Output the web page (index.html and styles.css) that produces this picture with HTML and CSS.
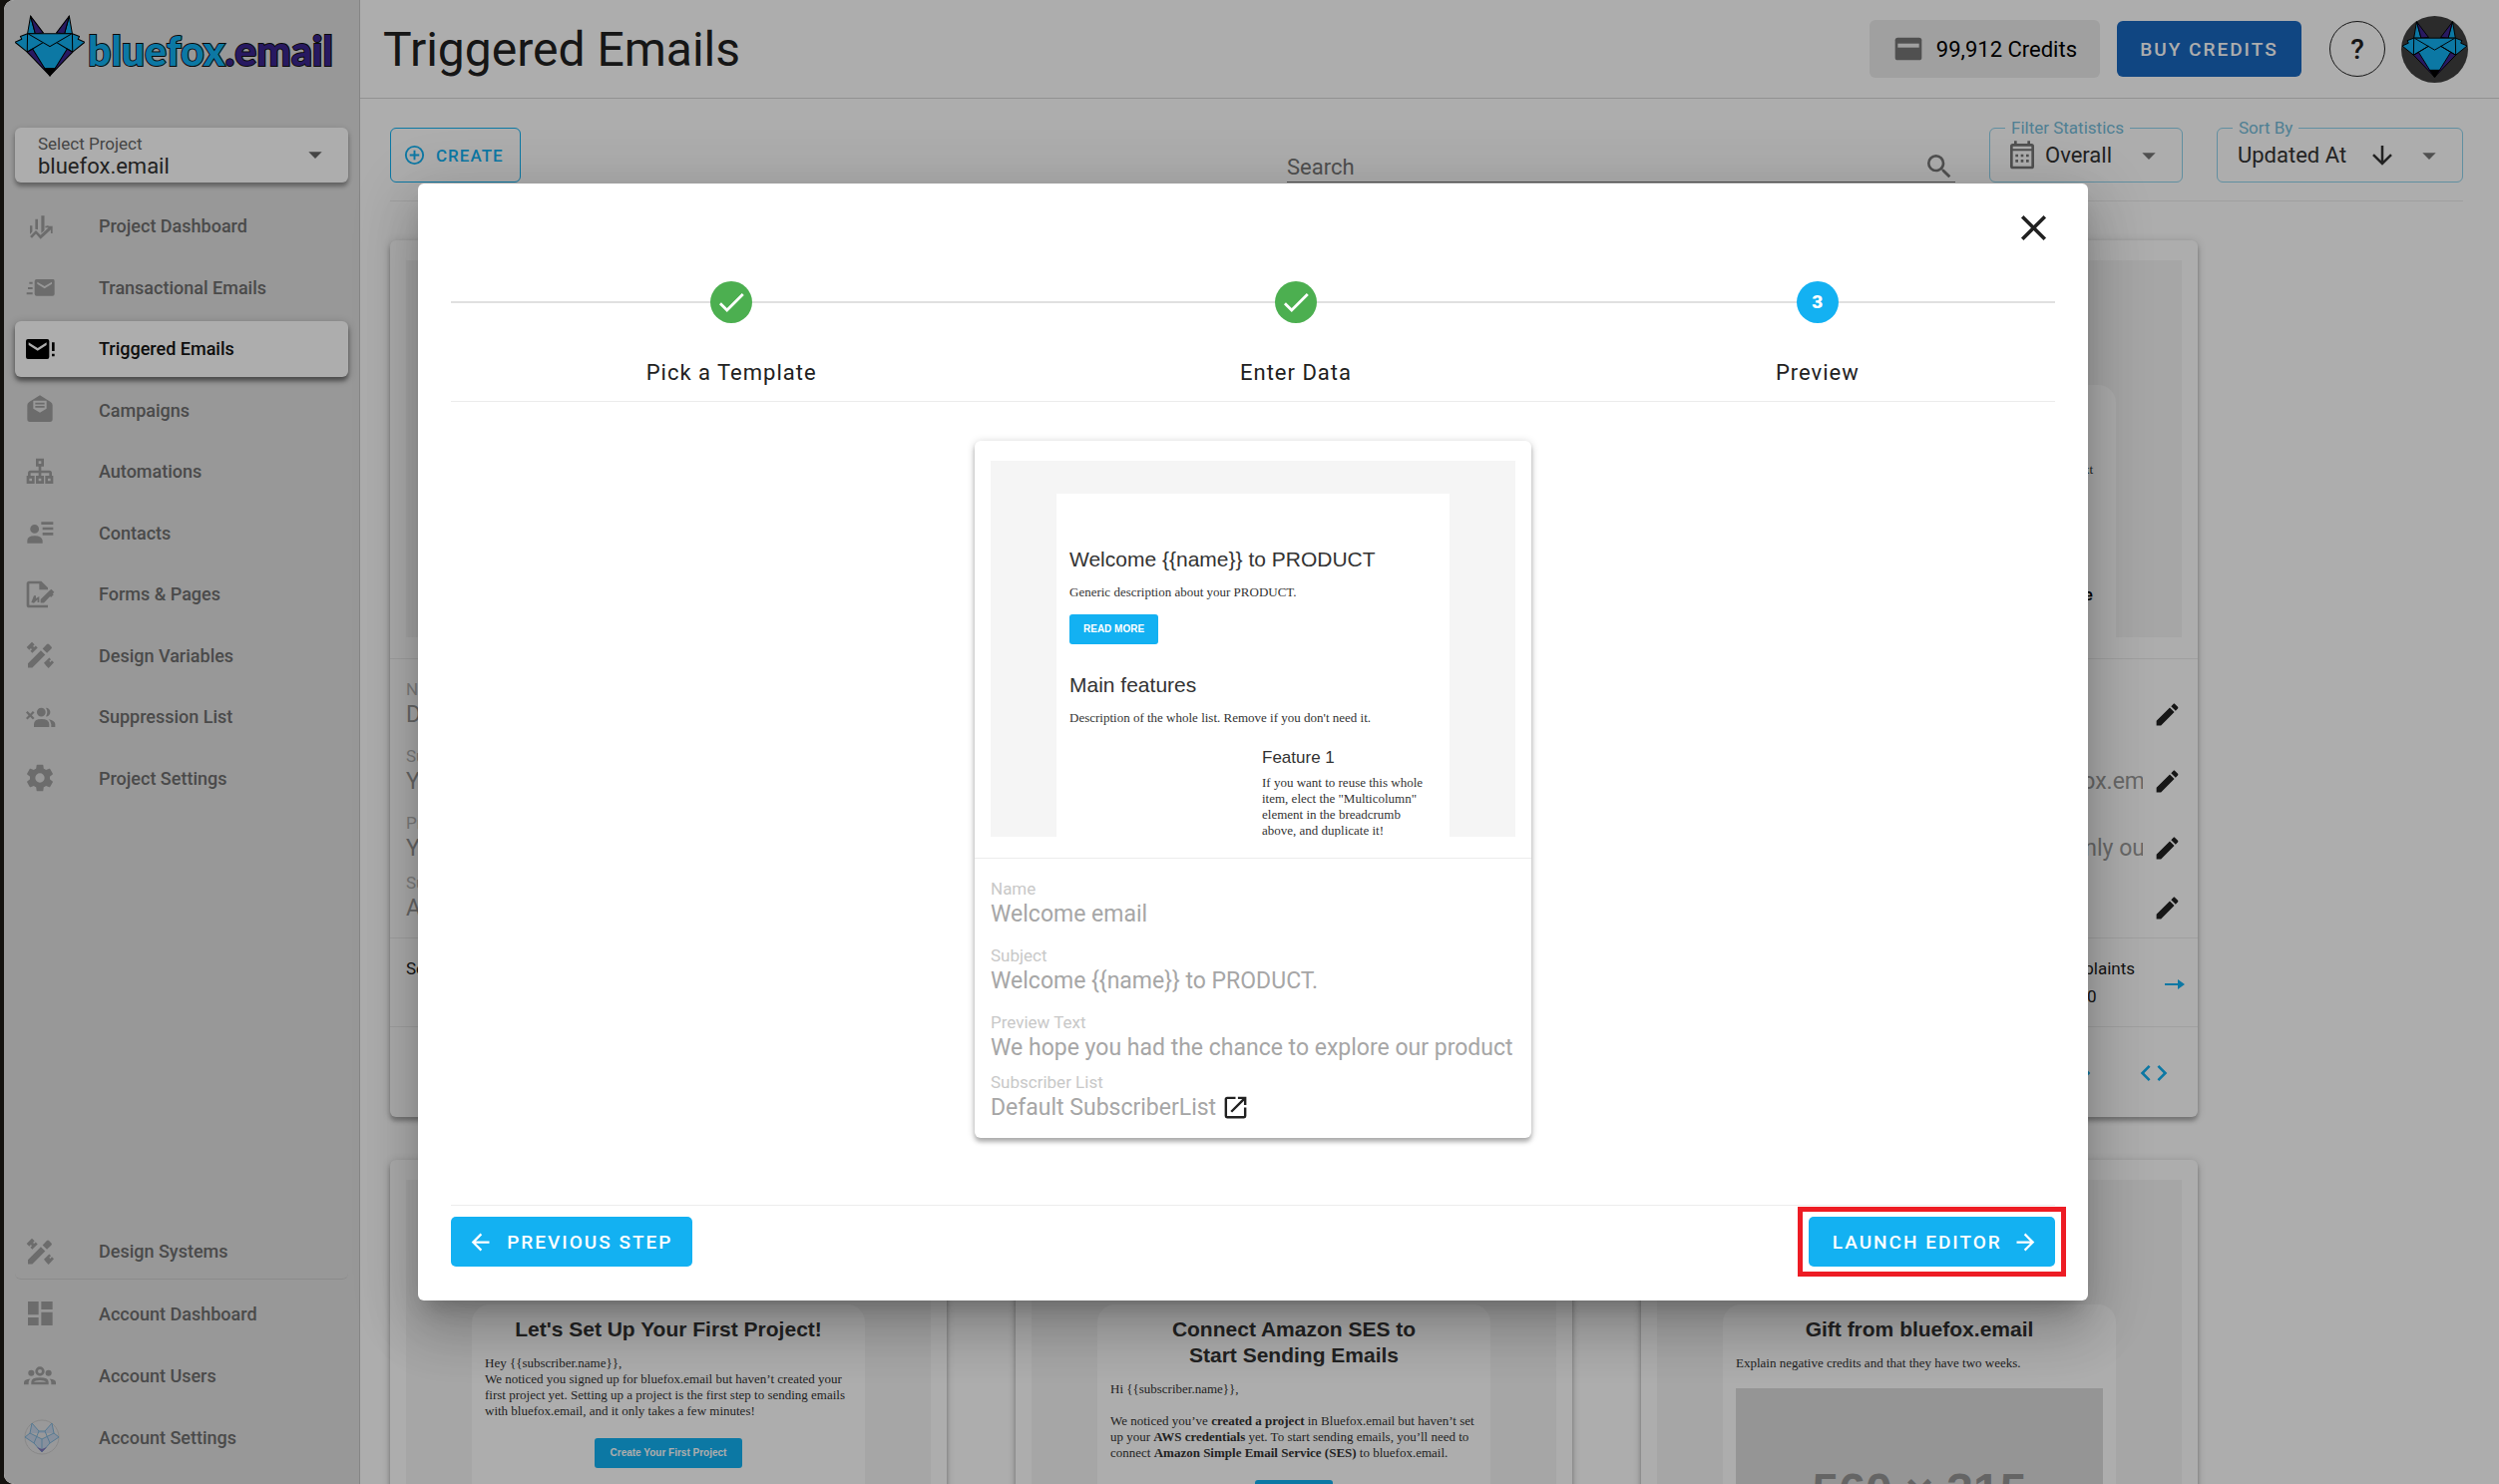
FILE: index.html
```html
<!DOCTYPE html>
<html lang="en">
<head>
<meta charset="utf-8">
<title>Triggered Emails - bluefox.email</title>
<link rel="stylesheet" href="styles.css">
</head>
<body>
<svg class="sprite" aria-hidden="true">
  <symbol id="fox" viewBox="0 0 206 180">
    <g stroke="#000" stroke-width="3" stroke-linejoin="round">
      <path fill="#13b1f2" d="M46 2 37 54H60Z"/><path fill="#3b2690" d="M46 2 84 52 60 54Z"/>
      <path fill="#13b1f2" d="M160 2 169 54H146Z"/><path fill="#3b2690" d="M160 2 122 52 146 54Z"/>
      <path fill="#13b1f2" d="M37 54H169L190 62 186 70 206 79 170 108 118 157H88L36 108 0 79 20 70 16 62Z"/>
      <path fill="#3b2690" d="M36 108 52 99 88 157 103 178Z"/><path fill="#3b2690" d="M170 108 154 99 118 157 103 178Z"/>
      <path fill="none" d="M40 55 103 92 166 55M36 108 83 80M170 108 123 80M37 54 36 108M169 54 170 108M83 80 52 99M123 80 154 99"/>
      <path fill="#000" d="M88 156H118L103 178Z"/>
    </g>
  </symbol>
  <symbol id="pencil" viewBox="0 0 24 24"><path d="M20.71,7.04C21.1,6.65 21.1,6 20.71,5.63L18.37,3.29C18,2.9 17.35,2.9 16.96,3.29L15.12,5.12L18.87,8.87M3,17.25V21H6.75L17.81,9.93L14.06,6.18L3,17.25Z"/></symbol>
  <symbol id="tools" viewBox="0 0 24 24"><path d="M3 18.2V21.4H6.3L16 11.7 12.7 8.4ZM14 7.1 17.3 10.4 20.6 7.2Q21.4 6.4 20.6 5.6L18.8 3.8Q18 3 17.2 3.8ZM2 6 6 2 8 4 6.8 5.2 7.6 6 8.8 4.8 10.3 6.3 6.3 10.3 4.8 8.8 6 7.6 5.2 6.8 4 8ZM15 17.8 19 13.8 20.3 15.1 19 16.4 19.8 17.2 21 16 22.5 17.5 18.5 21.8 17 20.3Z"/></symbol>
  <symbol id="caret" viewBox="0 0 24 24"><path d="M7 10 12 15 17 10Z"/></symbol>
  <symbol id="check" viewBox="0 0 24 24"><path d="M21,7L9,19L3.5,13.5L4.91,12.09L9,16.17L19.59,5.59L21,7Z"/></symbol>
  <symbol id="code" viewBox="0 0 24 24"><path d="M14.6,16.6L19.2,12L14.6,7.4L16,6L22,12L16,18L14.6,16.6M9.4,16.6L4.8,12L9.4,7.4L8,6L2,12L8,18L9.4,16.6Z"/></symbol>
</svg>

<div class="shell">
  <aside class="sidebar">
    <a class="brand" href="#"><svg class="brand-fox"><use href="#fox"/></svg><span class="brand-name">bluefox<b>.email</b></span></a>
    <div class="project">
      <label for="project">Select Project</label>
      <select id="project"><option>bluefox.email</option></select>
      <svg class="icon"><use href="#caret"/></svg>
    </div>
    <nav class="nav">
      <a href="#"><svg class="icon" viewBox="0 0 24 24"><path d="M4.5 11.5H6.3V16L4.5 18ZM8.5 6.5H10.5V14.5L8.5 14ZM13 4H15.4V15L13 17ZM17 11.500H18.500V13H17ZM4.500 19.500 9 15 12.500 18.500 18.500 13H16V11.800H21.500V17.200H20.200V14.500L12.500 21.500 9 17.700 6 20.800Z"/></svg>Project Dashboard</a>
      <a href="#"><svg class="icon" viewBox="0 0 24 24"><path d="M22 6H9.500Q8 6 8 7.500V17Q8 18.500 9.500 18.500H21.500Q23 18.500 23 17V7.500Q23 6 22 6ZM21 9.500 15.500 13 10 9.500V8L15.500 11.300 21 8ZM4 8H6.500V9.500H4ZM3 12H6.500V13.500H3ZM2 16H6.500V17.500H2Z"/></svg>Transactional Emails</a>
      <a href="#" class="active"><svg class="icon" viewBox="0 0 24 24"><path d="M3 4.500H17.500Q19 4.500 19 6V18Q19 19.500 17.500 19.500H3Q1.500 19.500 1.500 18V6Q1.500 4.500 3 4.500ZM3.500 7V9L10.300 13.300 17 9V7L10.300 11.200ZM21 7H23V13.500H21ZM21 15.500H23V17.500H21Z"/></svg>Triggered Emails</a>
      <a href="#"><svg class="icon" viewBox="0 0 24 24"><path fill-rule="evenodd" d="M12 1 20 6Q21.500 7 21.500 8.500V19Q21.500 21 19.500 21H4.500Q2.500 21 2.500 19V8.500Q2.500 7 4 6ZM7 5V11L12 14 17 11V5ZM8.500 6.500H15.500V7.800H8.500ZM8.500 9H15.500V10.300H8.500Z"/></svg>Campaigns</a>
      <a href="#"><svg class="icon" viewBox="0 0 24 24"><path fill-rule="evenodd" d="M9 2H15V8H13V11H19Q21 11 21 13V15H22V21H16V15H19V13H13V15H15V21H9V15H11V13H5V15H8V21H2V15H3V13Q3 11 5 11H11V8H9ZM11 4V6H13V4ZM4 17V19H6V17ZM11 17V19H13V17ZM18 17V19H20V17Z"/></svg>Automations</a>
      <a href="#"><svg class="icon" viewBox="0 0 24 24"><path d="M13 4H22V6H13ZM14 8H22V10H14ZM14 12H22V14H14ZM8 6A3.300 3.300 0 1 1 8 12.600 3.300 3.300 0 1 1 8 6ZM2.500 20V18Q2.500 14.500 8 14.500T14 18V20Z"/></svg>Contacts</a>
      <a href="#"><svg class="icon" viewBox="0 0 24 24"><path d="M4 2H13L18 7V8.500H11.500V4H4V20H18V22H4Q2 22 2 20V4Q2 2 4 2ZM20.500 8 22.800 10.300 21.600 11.500 22.300 12.200 20.300 14.200 19.600 13.500 15 18.300H12.500V15.800L19 9.300ZM5.500 18 7.500 13H9V15L11.500 13.500V18H10.200V16L7.500 18.500Z"/></svg>Forms &amp; Pages</a>
      <a href="#"><svg class="icon"><use href="#tools"/></svg>Design Variables</a>
      <a href="#"><svg class="icon" viewBox="0 0 24 24"><path d="M13 5A3.300 3.300 0 1 1 13 11.600 3.300 3.300 0 1 1 13 5ZM7.500 19.500V17.500Q7.500 13.500 13.200 13.500T19 17.500V19.500ZM16.500 5A3.300 3.300 0 0 1 16.500 11.600Q18.500 8.300 16.500 5ZM18.500 13.600Q23.500 14.500 23.500 17.500V19.500H20.500V17.500Q20.500 15 18.500 13.600ZM2.700 7.500 4.700 9.500 6.700 7.500 7.900 8.700 5.900 10.700 7.900 12.700 6.700 13.900 4.700 11.900 2.700 13.900 1.500 12.700 3.500 10.700 1.500 8.700Z"/></svg>Suppression List</a>
      <a href="#"><svg class="icon" viewBox="0 0 24 24"><path d="M12,15.5A3.5,3.5 0 0,1 8.5,12A3.500,3.500 0 0,1 12,8.500A3.500,3.500 0 0,1 15.500,12A3.500,3.500 0 0,1 12,15.500M19.430,12.970C19.470,12.650 19.500,12.330 19.500,12C19.500,11.670 19.470,11.340 19.430,11L21.540,9.370C21.730,9.220 21.780,8.950 21.660,8.730L19.660,5.270C19.540,5.050 19.270,4.960 19.050,5.050L16.560,6.050C16.040,5.660 15.500,5.320 14.870,5.070L14.500,2.420C14.460,2.180 14.250,2 14,2H10C9.750,2 9.540,2.180 9.500,2.420L9.130,5.070C8.500,5.320 7.960,5.660 7.440,6.050L4.950,5.050C4.730,4.960 4.460,5.050 4.340,5.270L2.340,8.730C2.210,8.950 2.270,9.220 2.460,9.370L4.570,11C4.530,11.340 4.500,11.670 4.500,12C4.500,12.330 4.530,12.650 4.570,12.970L2.460,14.630C2.270,14.780 2.210,15.050 2.340,15.270L4.340,18.730C4.460,18.950 4.730,19.030 4.950,18.950L7.440,17.940C7.960,18.340 8.500,18.680 9.130,18.930L9.500,21.580C9.540,21.820 9.750,22 10,22H14C14.250,22 14.460,21.820 14.500,21.580L14.870,18.930C15.500,18.670 16.040,18.340 16.560,17.940L19.050,18.950C19.270,19.030 19.540,18.950 19.660,18.730L21.660,15.270C21.780,15.050 21.730,14.780 21.540,14.630L19.430,12.970Z"/></svg>Project Settings</a>
    </nav>
    <nav class="nav nav-account">
      <a href="#" class="ruled"><svg class="icon"><use href="#tools"/></svg>Design Systems</a>
      <a href="#"><svg class="icon" viewBox="0 0 24 24"><path d="M13,3V9H21.500V3M13,21H21.500V11H13M3,21H11V15H3M3,13H11V3H3V13Z"/></svg>Account Dashboard</a>
      <a href="#"><svg class="icon" viewBox="0 0 24 24"><path fill-rule="evenodd" d="M12 5.500A3.500 3.500 0 1 1 12 12.500 3.500 3.500 0 1 1 12 5.500ZM12 7.500A1.500 1.500 0 1 0 12 10.500 1.500 1.500 0 1 0 12 7.500ZM5.500 8A2.300 2.300 0 1 1 5.500 12.600 2.300 2.300 0 1 1 5.500 8ZM18.500 8A2.300 2.300 0 1 1 18.500 12.600 2.300 2.300 0 1 1 18.500 8ZM5.500 19V17Q5.500 13.700 12 13.700T18.500 17V19ZM7.500 17H16.500Q15.500 15.700 12 15.700T7.500 17ZM0 19V17.500Q0 15 4.800 14.700 3.500 16 3.500 17.500V19ZM24 19V17.500Q24 15 19.200 14.700 20.500 16 20.500 17.500V19Z"/></svg>Account Users</a>
      <a href="#" class="account"><svg class="icon" viewBox="0 0 36 36"><circle cx="18" cy="18" r="17" fill="#e2e2e4" stroke="#c8c8c8"/><path fill="#c8d4e8" stroke="#7fb4d8" stroke-width="1" d="M8 4 15 12H21L28 4 30 14 35 18 26 24 18 33 10 24 1 18 6 14ZM6 14 18 20 30 14M10 24 15 12M26 24 21 12M18 20V32"/><path fill="#8076b8" d="M13 28 18 33 23 28 18 30Z"/></svg>Account Settings</a>
    </nav>
  </aside>

  <div class="page">
    <header class="topbar">
      <h1>Triggered Emails</h1>
      <div class="credits"><svg class="icon" viewBox="0 0 24 24"><path d="M4 3.500H20Q22 3.500 22 5.500V18.500Q22 20.500 20 20.500H4Q2 20.500 2 18.500V5.500Q2 3.500 4 3.500Z"/><path class="stripe" d="M4 8H20V11H4Z"/></svg>99,912 Credits</div>
      <button class="buy">BUY CREDITS</button>
      <button class="help" aria-label="Help">?</button>
      <a class="avatar" href="#" aria-label="Account"><svg><use href="#fox"/></svg></a>
    </header>
    <main class="content">
      <div class="toolbar">
        <button class="create"><svg class="icon" viewBox="0 0 24 24"><path d="M12,20C7.59,20 4,16.41 4,12C4,7.59 7.59,4 12,4C16.41,4 20,7.59 20,12C20,16.41 16.41,20 12,20M12,2A10,10 0 0,0 2,12A10,10 0 0,0 12,22A10,10 0 0,0 22,12A10,10 0 0,0 12,2M13,7H11V11H7V13H11V17H13V13H17V11H13V7Z"/></svg>CREATE</button>
        <div class="search"><input type="text" placeholder="Search" aria-label="Search"><svg class="icon" viewBox="0 0 24 24"><path d="M9.500,3A6.500,6.500 0 0,1 16,9.500C16,11.110 15.410,12.590 14.440,13.730L14.710,14H15.500L20.500,19L19,20.500L14,15.500V14.710L13.730,14.440C12.590,15.410 11.110,16 9.500,16A6.500,6.500 0 0,1 3,9.500A6.500,6.500 0 0,1 9.500,3M9.500,5C7,5 5,7 5,9.500C5,12 7,14 9.500,14C12,14 14,12 14,9.500C14,7 12,5 9.500,5Z"/></svg></div>
        <div class="picker picker-filter">
          <label for="filter">Filter Statistics</label>
          <svg class="icon" viewBox="0 0 24 24"><path fill-rule="evenodd" d="M6 1H8V3H16V1H18V3H19Q21 3 21 5V20Q21 22 19 22H5Q3 22 3 20V5Q3 3 5 3H6ZM5 8.500V20H19V8.500ZM5 5V7H19V5ZM7 11H9V13H7ZM11 11H13V13H11ZM15 11H17V13H15ZM7 15H9V17H7ZM11 15H13V17H11ZM15 15H17V17H15Z"/></svg>
          <select id="filter"><option>Overall</option></select>
          <svg class="icon"><use href="#caret"/></svg>
        </div>
        <div class="picker picker-sort">
          <label for="sort">Sort By</label>
          <select id="sort"><option>Updated At</option></select>
          <svg class="icon arrow-down" viewBox="0 0 24 24"><path d="M11,4H13V16L18.500,10.500L19.920,11.920L12,19.840L4.080,11.920L5.500,10.500L11,16V4Z"/></svg>
          <svg class="icon"><use href="#caret"/></svg>
        </div>
      </div>

      <div class="cards">
        <article class="card">
          <div class="card-preview"><div class="canvas"></div></div>
          <dl class="fields">
            <div><dt>Name</dt><dd>Double opt-in</dd></div>
            <div><dt>Subject</dt><dd>Your first email</dd></div>
            <div><dt>Preview Text</dt><dd>Your first email</dd></div>
            <div><dt>Subscriber List</dt><dd>All users</dd></div>
          </dl>
          <div class="stats"><span>Sent</span></div>
          <div class="actions"></div>
        </article>
        <article class="card">
          <div class="card-preview"><div class="canvas"></div></div>
          <dl class="fields"></dl>
          <div class="stats"></div>
          <div class="actions"></div>
        </article>
        <article class="card">
          <div class="card-preview"><div class="canvas"><div class="paper paper-low"><p>next</p><h4>here</h4></div></div></div>
          <dl class="fields">
            <div><dt>Name</dt><dd></dd><button aria-label="Edit name"><svg class="icon"><use href="#pencil"/></svg></button></div>
            <div><dt>Subject</dt><dd class="tail"><span>bluefox.em</span></dd><button aria-label="Edit subject"><svg class="icon"><use href="#pencil"/></svg></button></div>
            <div><dt>Preview Text</dt><dd class="tail"><span>only ou</span></dd><button aria-label="Edit preview text"><svg class="icon"><use href="#pencil"/></svg></button></div>
            <div><dt>Subscriber List</dt><dd></dd><button aria-label="Edit list"><svg class="icon"><use href="#pencil"/></svg></button></div>
          </dl>
          <div class="stats stats-end"><span>Complaints<br>0</span><svg class="arrow" viewBox="0 0 20 12"><path d="M0 5H13V1L20 6 13 11V7H0Z"/></svg></div>
          <div class="actions"><svg class="icon"><use href="#code"/></svg><svg class="icon"><use href="#code"/></svg></div>
        </article>

        <article class="card">
          <div class="card-preview"><div class="canvas"><div class="paper">
            <h3>Let's Set Up Your First Project!</h3>
            <p>Hey {{subscriber.name}},<br>We noticed you signed up for bluefox.email but haven’t created your first project yet. Setting up a project is the first step to sending emails with bluefox.email, and it only takes a few minutes!</p>
            <button class="mail-button">Create Your First Project</button>
          </div></div></div>
        </article>
        <article class="card">
          <div class="card-preview"><div class="canvas"><div class="paper">
            <h3>Connect Amazon SES to<br>Start Sending Emails</h3>
            <p>Hi {{subscriber.name}},<br><br>We noticed you’ve <b>created a project</b> in Bluefox.email but haven’t set up your <b>AWS credentials</b> yet. To start sending emails, you’ll need to connect <b>Amazon Simple Email Service (SES)</b> to bluefox.email.</p>
            <button class="mail-button">Start Now</button>
          </div></div></div>
        </article>
        <article class="card">
          <div class="card-preview"><div class="canvas"><div class="paper">
            <h3>Gift from bluefox.email</h3>
            <p>Explain negative credits and that they have two weeks.</p>
            <div class="placeholder">560 × 315</div>
          </div></div></div>
        </article>
      </div>
    </main>
  </div>

  <div class="overlay">
    <section class="dialog" role="dialog" aria-modal="true" aria-label="Create triggered email">
      <button class="close" aria-label="Close"><svg viewBox="0 0 24 24"><path d="M19,6.41L17.59,5L12,10.59L6.41,5L5,6.41L10.59,12L5,17.59L6.41,19L12,13.41L17.59,19L19,17.59L13.41,12L19,6.41Z"/></svg></button>
      <ol class="steps">
        <li><span class="dot done"><svg><use href="#check"/></svg></span>Pick a Template</li>
        <li><span class="dot done"><svg><use href="#check"/></svg></span>Enter Data</li>
        <li><span class="dot">3</span>Preview</li>
      </ol>
      <article class="card card-new">
        <div class="card-preview"><div class="canvas"><div class="paper paper-new">
          <h2>Welcome {{name}} to PRODUCT</h2>
          <p>Generic description about your PRODUCT.</p>
          <button class="mail-button">READ MORE</button>
          <h2>Main features</h2>
          <p>Description of the whole list. Remove if you don't need it.</p>
          <div class="feature"><h3>Feature 1</h3><p>If you want to reuse this whole item, elect the "Multicolumn" element in the breadcrumb above, and duplicate it!</p></div>
        </div></div></div>
        <dl class="fields">
          <div><dt>Name</dt><dd>Welcome email</dd></div>
          <div><dt>Subject</dt><dd>Welcome {{name}} to PRODUCT.</dd></div>
          <div><dt>Preview Text</dt><dd>We hope you had the chance to explore our product</dd></div>
          <div><dt>Subscriber List</dt><dd>Default SubscriberList <a href="#" aria-label="Open list"><svg class="icon" viewBox="0 0 24 24"><path d="M14,3V5H17.59L7.76,14.83L9.17,16.24L19,6.41V10H21V3M19,19H5V5H12V3H5C3.89,3 3,3.9 3,5V19A2,2 0 0,0 5,21H19A2,2 0 0,0 21,19V12H19V19Z"/></svg></a></dd></div>
        </dl>
      </article>
      <footer class="dialog-actions">
        <button class="primary"><svg class="icon" viewBox="0 0 24 24"><path d="M20,11V13H8L13.5,18.5L12.08,19.92L4.16,12L12.08,4.08L13.5,5.5L8,11H20Z"/></svg>PREVIOUS STEP</button>
        <div class="highlight"><button class="primary launch">LAUNCH EDITOR<svg class="icon" viewBox="0 0 24 24"><path d="M4,11V13H16L10.5,18.5L11.92,19.92L19.84,12L11.92,4.08L10.5,5.5L16,11H4Z"/></svg></button></div>
      </footer>
    </section>
  </div>
</div>
</body>
</html>
```
FILE: styles.css
```css
* { box-sizing: border-box; }

:root {
  --blue: #13b1f2;
  --line: #ececec;
}

html, body { height: 100%; }

body {
  margin: 0;
  padding-left: 4px;
  background: #14120f;
  color: #212121;
  font-family: Roboto, "Liberation Sans", sans-serif;
  font-size: 22px;
  overflow: hidden;
}

h1, h2, h3, h4, p, dl, dd, ol { margin: 0; padding: 0; }
ol { list-style: none; }
a { color: inherit; text-decoration: none; }
button, select, input { font: inherit; color: inherit; border: 0; background: none; padding: 0; margin: 0; }
select { appearance: none; outline: 0; }
svg { fill: currentColor; display: block; flex: none; }
.sprite { position: absolute; width: 0; height: 0; }
.icon { width: 32px; height: 32px; }

.shell {
  position: relative;
  display: flex;
  height: 100vh;
  background: #fff;
  border-radius: 10px 0 0 10px;
  overflow: hidden;
}

/* Sidebar */
.sidebar {
  flex: none;
  display: flex;
  flex-direction: column;
  width: 357px;
  padding: 14px 11px 16px;
  background: #e0e0e0;
  border-right: 1px solid #c4c4c4;
}
.brand { display: flex; align-items: center; gap: 3px; height: 64px; margin-bottom: 50px; }
.brand-fox { width: 70px; height: 62px; }
.brand-name {
  padding-top: 10px;
  font: 900 41px/48px Lato, sans-serif;
  color: var(--blue);
  -webkit-text-stroke: 2px #111;
  paint-order: stroke fill;
}
.brand-name b { color: #3b2690; font-weight: 900; }

.project {
  position: relative;
  flex: none;
  display: flex;
  flex-direction: column;
  height: 55px;
  padding: 6px 23px 0;
  background: #fff;
  border-radius: 6px;
  box-shadow: 0 4px 4px rgba(0, 0, 0, .3), 0 1px 6px rgba(0, 0, 0, .12);
}
.project label { font-size: 17px; line-height: 20px; color: #666; }
.project select { font-size: 22px; line-height: 26px; height: 26px; color: #333; }
.project .icon { position: absolute; right: 17px; top: 11px; color: #666; }

.nav {
  flex: none;
  display: grid;
  grid-auto-rows: 1fr;
  align-items: center;
  height: 615px;
  margin-top: 13px;
}
.nav a {
  display: flex;
  align-items: center;
  gap: 43px;
  height: 56px;
  padding-left: 9px;
  font-size: 18px;
  font-weight: 500;
  color: #6e6e6e;
  border-radius: 6px;
}
.nav .icon { color: #9f9f9f; }
.nav a.active {
  color: #151515;
  background: #fff;
  box-shadow: 0 4px 4px rgba(0, 0, 0, .4), 0 2px 8px rgba(0, 0, 0, .25);
}
.nav .active .icon { color: #000; }
.nav-account { height: 248px; margin-top: auto; }
.nav a.ruled { border-bottom: 1px solid #cfcfcf; }
.nav .account .icon { width: 36px; height: 36px; }
.nav .account { gap: 39px; }

/* Top bar */
.page { flex: 1; min-width: 0; display: flex; flex-direction: column; }
.topbar {
  flex: none;
  display: flex;
  align-items: center;
  height: 99px;
  padding: 0 31px 0 23px;
  border-bottom: 1px solid #d8d8d8;
}
h1 { font-size: 48px; font-weight: 400; margin-right: auto; }
.credits {
  display: flex;
  align-items: center;
  gap: 12px;
  height: 58px;
  margin-right: 17px;
  padding: 0 23px;
  color: #000;
  background: #ececec;
  border-radius: 6px;
}
.credits .icon { color: #767676; }
.credits .stripe { fill: #ececec; }
.buy {
  width: 185px;
  height: 56px;
  margin-right: 28px;
  font-size: 19px;
  font-weight: 500;
  letter-spacing: 2px;
  color: #fff;
  background: #1867c0;
  border-radius: 6px;
}
.help {
  width: 56px;
  height: 56px;
  margin-right: 16px;
  font-size: 28px;
  font-weight: 500;
  border: 1px solid #212121;
  border-radius: 50%;
}
.avatar {
  display: grid;
  place-items: center;
  width: 67px;
  height: 67px;
  background: #404040;
  border-radius: 50%;
}
.avatar svg { width: 65px; height: 57px; }

/* Toolbar */
.content { flex: 1; min-height: 0; padding: 29px 36px 0 30px; overflow: hidden; }
.toolbar {
  display: flex;
  gap: 34px;
  height: 74px;
  padding-bottom: 18px;
  border-bottom: 1px solid var(--line);
}
.create {
  display: flex;
  align-items: center;
  gap: 10px;
  margin-right: auto;
  padding: 0 16px 0 12px;
  font-size: 17px;
  font-weight: 500;
  letter-spacing: 1px;
  color: var(--blue);
  border: 1px solid var(--blue);
  border-radius: 6px;
}
.create .icon { width: 23px; height: 23px; }
.search { display: flex; align-items: center; width: 670px; padding-top: 24px; color: #767676; border-bottom: 1px solid #767676; }
.search input { flex: 1; min-width: 0; outline: 0; }
.search input::placeholder { color: #767676; opacity: 1; }
.picker {
  position: relative;
  display: flex;
  align-items: center;
  padding: 0 17px 0 20px;
  color: #767676;
  border: 1px solid #8fd3ee;
  border-radius: 6px;
}
.picker label {
  position: absolute;
  left: 15px;
  top: -11px;
  padding: 0 6px;
  font-size: 17px;
  line-height: 20px;
  white-space: nowrap;
  color: #75bcd9;
  background: #fff;
}
.picker select { flex: 1; min-width: 0; color: #333; }
.picker-filter { width: 194px; gap: 7px; padding-left: 16px; }
.picker-sort { width: 247px; }
.picker .arrow-down { margin-right: 16px; color: #333; width: 30px; }

/* Cards */
.cards {
  display: grid;
  grid-template-columns: repeat(3, 558px);
  grid-auto-rows: 879px;
  gap: 43px 69px;
  padding-top: 39px;
}
.card {
  display: flex;
  flex-direction: column;
  background: #fff;
  border-radius: 6px;
  box-shadow: 0 4px 4px rgba(0, 0, 0, .25), 0 1px 8px rgba(0, 0, 0, .18);
}
.card-preview { padding: 20px 16px 21px; border-bottom: 1px solid var(--line); }
.canvas { height: 378px; padding: 125px 66px 0; background: #f5f5f5; overflow: hidden; }
.paper {
  display: flex;
  flex-direction: column;
  height: 400px;
  padding: 12px 13px 0;
  font: 13px/16px "Liberation Serif", serif;
  color: #333;
  background: #fff;
  border-radius: 18px 18px 0 0;
}
.paper h2, .paper h3, .mail-button { font-family: "Liberation Sans", sans-serif; }
.paper h3 { margin-bottom: 13px; font-size: 21px; line-height: 26px; text-align: center; }
.mail-button {
  align-self: center;
  height: 30px;
  margin-top: 19px;
  padding: 0 16px;
  font-size: 10px;
  font-weight: 700;
  color: #fff;
  background: var(--blue);
  border-radius: 3px;
}
.placeholder {
  height: 206px;
  margin-top: 17px;
  font: 700 48px/206px "Liberation Sans", sans-serif;
  text-align: center;
  color: #969696;
  background: #dcdcdc;
}
.paper-low { padding: 77px 23px 0; text-align: right; }
.paper-low h4 { margin-top: 109px; font: 700 16px/18px "Liberation Sans", sans-serif; color: #000; }

.fields { flex: none; height: 279px; padding: 20px 16px 0; }
.fields > div { position: relative; height: 67px; }
.fields > div:nth-child(3) { height: 60px; }
.fields dt { font-size: 17px; line-height: 21px; color: #b9b9b9; }
.fields dd { display: flex; align-items: center; height: 29px; font-size: 23px; white-space: nowrap; color: #9a9a9a; }
.fields button { position: absolute; right: 0; top: 21px; }
.fields button .icon { width: 29px; height: 29px; color: #212121; }
.fields .tail { justify-content: flex-end; margin-right: 39px; overflow: hidden; }
.fields .tail span { margin-right: -2px; }
.stats {
  flex: none;
  display: flex;
  height: 90px;
  padding: 16px 16px 0;
  font-size: 17px;
  line-height: 28px;
  border-top: 1px solid var(--line);
  border-bottom: 1px solid var(--line);
}
.stats-end { justify-content: flex-end; gap: 30px; padding-right: 13px; text-align: center; }
.arrow { width: 20px; height: 12px; margin-top: 24px; color: var(--blue); }
.actions { flex: 1; display: flex; align-items: center; justify-content: flex-end; gap: 45px; padding: 2px 28px 0 0; color: var(--blue); }

/* Dialog */
.overlay {
  position: absolute;
  inset: 0;
  display: grid;
  place-items: center;
  padding-left: 3px;
  background: rgba(0, 0, 0, .32);
}
.dialog {
  width: 67%;
  max-width: 1674px;
  padding: 23px 33px 34px;
  background: #fff;
  border-radius: 6px;
  box-shadow: 0 15px 20px -9px rgba(0, 0, 0, .2), 0 32px 51px 4px rgba(0, 0, 0, .14), 0 12px 62px 11px rgba(0, 0, 0, .12);
}
.close { display: block; margin: 0 0 32px auto; }
.close svg { width: 43px; height: 43px; }
.steps {
  display: grid;
  grid-template-columns: 562fr 570fr 476fr;
  height: 121px;
  background: linear-gradient(#e0e0e0, #e0e0e0) 0 20px / 100% 2px no-repeat;
  border-bottom: 1px solid var(--line);
}
.steps li { display: flex; flex-direction: column; align-items: center; gap: 37px; line-height: 26px; letter-spacing: 1px; font-size: 22px; }
.dot {
  display: grid;
  place-items: center;
  width: 42px;
  height: 42px;
  font-size: 19px;
  font-weight: 900;
  letter-spacing: 0;
  color: #fff;
  background: var(--blue);
  border-radius: 50%;
}
.dot.done { background: #4caf50; }
.dot svg { width: 34px; height: 34px; }

.card-new { width: 558px; height: 699px; margin: 39px auto 67px; }
.card-new .canvas { height: 377px; padding-top: 33px; }
.paper-new { padding: 53px 13px 0; border-radius: 0; }
.paper-new h2 { font-size: 21px; font-weight: 400; line-height: 26px; }
.paper-new p { margin-top: 12px; }
.paper-new .mail-button { align-self: flex-start; margin: 14px 0 28px; padding: 0 14px; }
.paper-new .feature { width: 170px; margin: 22px 0 0 193px; }
.paper-new .feature h3 { margin: 0; font-size: 17px; font-weight: 400; line-height: 20px; text-align: left; }
.paper-new .feature p { margin-top: 7px; }
.card-new .fields dt { color: #c8c8c8; }
.card-new .fields dd { color: #a6a6a6; }
.card-new .icon { width: 29px; height: 29px; margin-left: 5px; color: #212121; }

.dialog-actions {
  display: flex;
  justify-content: space-between;
  padding-top: 11px;
  border-top: 1px solid var(--line);
}
.primary {
  display: flex;
  align-items: center;
  gap: 13px;
  height: 50px;
  padding: 0 20px 0 16px;
  font-size: 19px;
  font-weight: 500;
  letter-spacing: 2px;
  color: #fff;
  background: var(--blue);
  border-radius: 5px;
}
.primary .icon { width: 27px; height: 27px; }
.launch { gap: 10px; padding: 0 16px 0 24px; }
.highlight { position: relative; }
.highlight::after {
  content: "";
  position: absolute;
  inset: -10px -11px;
  border: 5px solid #ed1c24;
  pointer-events: none;
}
```
